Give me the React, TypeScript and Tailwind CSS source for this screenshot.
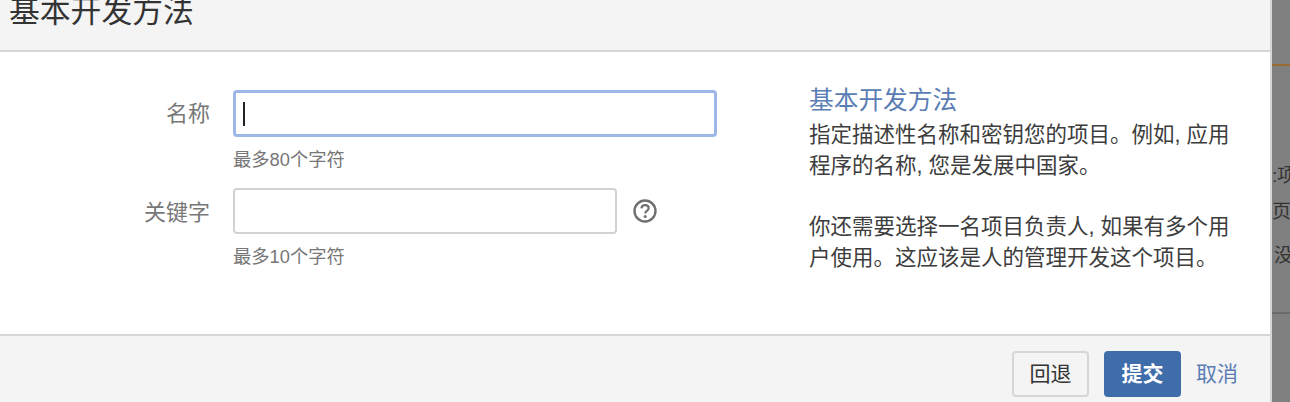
export default function App() {
    return (
        <div className="flex h-[402px] w-[1290px] overflow-hidden bg-white font-['Liberation_Sans','Noto_Sans_CJK_SC',sans-serif]">
            <div className="flex h-full w-[1270px] shrink-0 flex-col">
                {/* Header, title is cut by the top of the picture */}
                <div className="flex h-[52px] shrink-0 items-end overflow-hidden border-b-2 border-[#d6d6d6] bg-[#f4f4f4] pl-[9px]">
                    <h1 className="mb-[16px] text-[30.8px] leading-[44px] whitespace-nowrap text-[#333]">基本开发方法</h1>
                </div>

                <div className="flex h-[284px] shrink-0 border-b-2 border-[#d6d6d6] bg-white">
                    {/* Form */}
                    <div className="w-[809px] shrink-0 pt-[38px]">
                        <div className="flex">
                            <label className="w-[210px] pt-[10px] text-right text-[22px] leading-[28px] text-[#777]">名称</label>
                            <div className="ml-[23px]">
                                <div className="flex h-[47px] w-[484px] items-center rounded-[4px] border-[3px] border-[#9db8e8] pl-[7px]">
                                    <div className="h-[24px] w-[1.5px] bg-[#222]" />
                                </div>
                                <p className="mt-[11px] text-[18.3px] leading-[24px] text-[#777]">最多80个字符</p>
                            </div>
                        </div>
                        <div className="mt-[16px] flex">
                            <label className="w-[210px] pt-[11px] text-right text-[22px] leading-[28px] text-[#777]">关键字</label>
                            <div className="ml-[23px]">
                                <div className="flex items-center">
                                    <div className="h-[46px] w-[384px] rounded-[4px] border-2 border-[#d2d2d2]" />
                                    <svg className="ml-[15px]" width="26" height="26" viewBox="0 0 26 26" fill="none">
                                        <circle cx="13" cy="13" r="10.5" stroke="#6f6f6f" strokeWidth="2.4" />
                                        <path d="M9.4 10.4c.2-2.2 1.7-3.3 3.7-3.3 2.1 0 3.6 1.2 3.6 3 0 1.4-.8 2.1-1.8 2.8-1 .7-1.6 1.2-1.6 2.5" stroke="#6f6f6f" strokeWidth="2.2" />
                                        <circle cx="13.2" cy="18.6" r="1.5" fill="#6f6f6f" />
                                    </svg>
                                </div>
                                <p className="mt-[11px] text-[18.3px] leading-[24px] text-[#777]">最多10个字符</p>
                            </div>
                        </div>
                    </div>

                    {/* Help text */}
                    <div className="w-[440px] pt-[33px] text-[21.5px] leading-[31px] text-[#3d3d3d]">
                        <h2 className="text-[24.7px] leading-[31px] text-[#5a7db4]">基本开发方法</h2>
                        <p className="mt-[4px]">
                            指定描述性名称和密钥您的项目。例如, 应用
                            <br />
                            程序的名称, 您是发展中国家。
                        </p>
                        <p className="mt-[30px]">
                            你还需要选择一名项目负责人, 如果有多个用
                            <br />
                            户使用。这应该是人的管理开发这个项目。
                        </p>
                    </div>
                </div>

                {/* Footer */}
                <div className="flex flex-1 items-start justify-end bg-[#f4f4f4] pt-[15px] pr-[32px]">
                    <button className="h-[46px] w-[77px] rounded-[4px] border-2 border-[#d6d6d6] bg-[#f4f4f4] text-[21px] text-[#333]">回退</button>
                    <button className="ml-[15px] h-[46px] w-[77px] rounded-[4px] bg-[#3f6daa] text-[21px] font-bold text-white">提交</button>
                    <a className="ml-[15px] flex h-[46px] items-center text-[21px] text-[#5a7db4]">取消</a>
                </div>
            </div>

            {/* Dimmed page behind the dialog */}
            <div className="w-[2px] shrink-0 bg-[#d6d6d6]" />
            <div className="flex h-full min-w-0 flex-1 flex-col overflow-hidden bg-[#808080] text-[19px] text-[#333]">
                <div className="mt-[64px] h-[2px] shrink-0 bg-[#9a6a30]" />
                <div className="mt-[92px] leading-[36px] whitespace-nowrap">
                    <p>:项</p>
                    <p>页面</p>
                </div>
                <p className="mt-[8px] pl-[2px] leading-[36px] whitespace-nowrap">没</p>
                <div className="mt-[38px] h-[2px] shrink-0 bg-[#6b6b6b]" />
            </div>
        </div>
    );
}
